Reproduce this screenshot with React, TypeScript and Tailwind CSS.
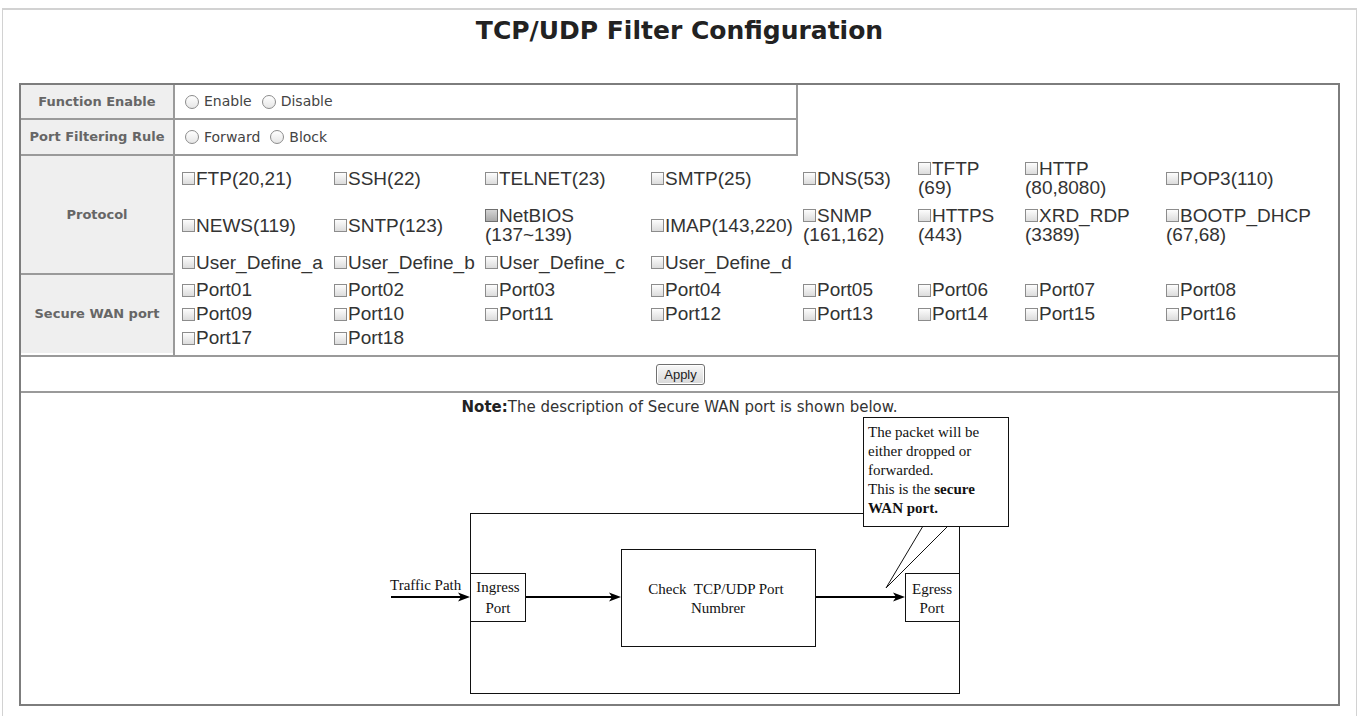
import type { ReactNode } from "react";

const PROTOCOL_ROWS: { name: string; sub?: string; dark?: boolean }[][] = [
  [
    { name: "FTP(20,21)" },
    { name: "SSH(22)" },
    { name: "TELNET(23)" },
    { name: "SMTP(25)" },
    { name: "DNS(53)" },
    { name: "TFTP", sub: "(69)" },
    { name: "HTTP", sub: "(80,8080)" },
    { name: "POP3(110)" },
  ],
  [
    { name: "NEWS(119)" },
    { name: "SNTP(123)" },
    { name: "NetBIOS", sub: "(137~139)", dark: true },
    { name: "IMAP(143,220)" },
    { name: "SNMP", sub: "(161,162)" },
    { name: "HTTPS", sub: "(443)" },
    { name: "XRD_RDP", sub: "(3389)" },
    { name: "BOOTP_DHCP", sub: "(67,68)" },
  ],
  [
    { name: "User_Define_a" },
    { name: "User_Define_b" },
    { name: "User_Define_c" },
    { name: "User_Define_d" },
  ],
];

const ROW_H = ["h-[44px]", "h-[50px]", "h-[25px]"];

const PORTS = Array.from({ length: 18 }, (_, i) => `Port${String(i + 1).padStart(2, "0")}`);

const COLS = "grid grid-cols-[152px_151px_166px_152px_115px_107px_141px_1fr]";

function Box({ dark }: { dark?: boolean }) {
  return (
    <span
      className={`mr-[1px] inline-block h-[13px] w-[13px] shrink-0 border ${
        dark
          ? "border-[#6f6f6f] bg-linear-to-b from-[#d4d4d4] to-[#a9a9a9]"
          : "border-[#8c8c8c] bg-linear-to-b from-[#fdfdfd] to-[#dcdcdc]"
      }`}
    />
  );
}

function Radio({ label }: { label: string }) {
  return (
    <span className="mr-[10px] inline-flex items-center">
      <span className="mr-[5px] inline-block h-[14px] w-[14px] rounded-full border border-[#8c8c8c] bg-linear-to-b from-white to-[#e6e6e6]" />
      {label}
    </span>
  );
}

function Label({ children, className = "" }: { children: ReactNode; className?: string }) {
  return (
    <div
      className={`flex items-center justify-center bg-[#efefef] text-[13px] font-bold text-[#666] ${className}`}
    >
      {children}
    </div>
  );
}

function Arrow({ x1, x2, y }: { x1: number; x2: number; y: number }) {
  return (
    <g>
      <line x1={x1} y1={y} x2={x2 - 8} y2={y} stroke="#000" strokeWidth="2" />
      <polygon points={`${x2},${y} ${x2 - 12},${y - 4.5} ${x2 - 9},${y} ${x2 - 12},${y + 4.5}`} fill="#000" />
    </g>
  );
}

function Diagram() {
  return (
    <svg
      width="680"
      height="290"
      viewBox="0 0 680 290"
      className="mx-auto block font-['Liberation_Serif',serif]"
    >
      <g transform="translate(20,0)">
        {/* outer device box */}
        <rect x="110.5" y="98.5" width="489" height="180" fill="none" stroke="#111" strokeWidth="1" />

        {/* ingress */}
        <rect x="110.5" y="158.5" width="55" height="48" fill="#fff" stroke="#111" strokeWidth="1" />
        <text x="138" y="177" fontSize="15" textAnchor="middle" fill="#111">Ingress</text>
        <text x="138" y="198" fontSize="15" textAnchor="middle" fill="#111">Port</text>

        {/* check */}
        <rect x="261.5" y="134.5" width="194" height="97" fill="#fff" stroke="#111" strokeWidth="1" />
        <text x="356" y="179" fontSize="15" textAnchor="middle" fill="#111" className="whitespace-pre">
          Check  TCP/UDP Port
        </text>
        <text x="358" y="198" fontSize="15" textAnchor="middle" fill="#111">Numbrer</text>

        {/* egress */}
        <rect x="545.5" y="158.5" width="54" height="48" fill="#fff" stroke="#111" strokeWidth="1" />
        <text x="572" y="179" fontSize="15" textAnchor="middle" fill="#111">Egress</text>
        <text x="572" y="198" fontSize="15" textAnchor="middle" fill="#111">Port</text>

        {/* traffic path */}
        <text x="30" y="175" fontSize="15" fill="#111">Traffic Path</text>
        <Arrow x1={31} x2={110} y={182} />
        <Arrow x1={166} x2={261} y={182} />
        <Arrow x1={456} x2={545} y={182} />

        {/* callout */}
        <polygon points="563,111 526,173 588,111" fill="#fff" stroke="none" />
        <line x1="563" y1="111" x2="526" y2="173" stroke="#111" strokeWidth="1" />
        <line x1="588" y1="111" x2="526" y2="173" stroke="#111" strokeWidth="1" />
        <rect x="503.5" y="2.5" width="145" height="109" fill="#fff" stroke="#111" strokeWidth="1" />
        <text fontSize="15" fill="#111">
          <tspan x="508" y="22">The packet will be</tspan>
          <tspan x="508" y="41">either dropped or</tspan>
          <tspan x="508" y="60">forwarded.</tspan>
          <tspan x="508" y="79">
            This is the <tspan fontWeight="bold">secure</tspan>
          </tspan>
          <tspan x="508" y="98" fontWeight="bold">
            WAN port.
          </tspan>
        </text>
      </g>
    </svg>
  );
}

export default function App() {
  return (
    <div className="min-h-[716px] bg-white font-['DejaVu_Sans',Verdana,sans-serif] text-[#333]">
      <div className="mx-[2px] mt-[8px] h-[708px] border-x border-t-2 border-[#d2d2d2] px-[16px]">
        <h1 className="pt-[5px] text-center text-[25px] leading-[32px] font-bold text-[#222]">
          TCP/UDP Filter Configuration
        </h1>

        <div className="mt-[36px] border-2 border-[#7d7d7d]">
          {/* enable / rule */}
          <div className="w-[777px] border-r-2 border-b-2 border-[#9a9a9a] text-[14px] text-[#444]">
            <div className="flex h-[35px] border-b-2 border-[#9a9a9a]">
              <Label className="w-[154px] border-r-2 border-[#9a9a9a]">Function Enable</Label>
              <div className="flex items-center pl-[10px]">
                <Radio label="Enable" />
                <Radio label="Disable" />
              </div>
            </div>
            <div className="flex h-[34px]">
              <Label className="w-[154px] border-r-2 border-[#9a9a9a]">Port Filtering Rule</Label>
              <div className="flex items-center pl-[10px]">
                <Radio label="Forward" />
                <Radio label="Block" />
              </div>
            </div>
          </div>

          {/* protocol / ports */}
          <div className="flex border-b-2 border-[#9a9a9a]">
            <div className="flex w-[154px] shrink-0 flex-col border-r-2 border-[#9a9a9a]">
              <Label className="h-[119px] border-b-2 border-[#9a9a9a]">Protocol</Label>
              <Label className="h-[78px]">Secure WAN port</Label>
            </div>
            <div className="flex-1 pl-[7px] font-['Liberation_Sans',Arial,sans-serif] text-[19px] text-[#333]">
              <div className="h-[121px]">
                {PROTOCOL_ROWS.map((row, r) => (
                  <div key={r} className={`${COLS} ${ROW_H[r]} items-center`}>
                    {row.map((p) => (
                      <div key={p.name} className="leading-[19px]">
                        <div className="flex items-center">
                          <Box dark={p.dark} />
                          <span>{p.name}</span>
                        </div>
                        {p.sub && <div>{p.sub}</div>}
                      </div>
                    ))}
                  </div>
                ))}
              </div>
              <div className={`${COLS} pt-[1px] pb-[5px]`}>
                {PORTS.map((p) => (
                  <div key={p} className="flex h-[24px] items-center">
                    <Box />
                    <span>{p}</span>
                  </div>
                ))}
              </div>
            </div>
          </div>

          {/* apply */}
          <div className="flex h-[36px] items-center justify-center border-b-2 border-[#9a9a9a]">
            <button className="ml-[2px] h-[21px] w-[49px] rounded-[3px] border border-[#707070] bg-linear-to-b from-[#f8f8f8] to-[#d8d8d8] font-['Liberation_Sans',Arial,sans-serif] text-[13px] leading-none text-[#222] shadow-[inset_0_0_0_1px_#fff]">
              Apply
            </button>
          </div>

          {/* note + diagram */}
          <div className="h-[311px] overflow-hidden pt-[6px]">
            <p className="text-center text-[15px] leading-[16px] text-[#333]">
              <b className="text-[#222]">Note:</b>The description of Secure WAN port is shown below.
            </p>
            <Diagram />
          </div>
        </div>
      </div>
    </div>
  );
}
